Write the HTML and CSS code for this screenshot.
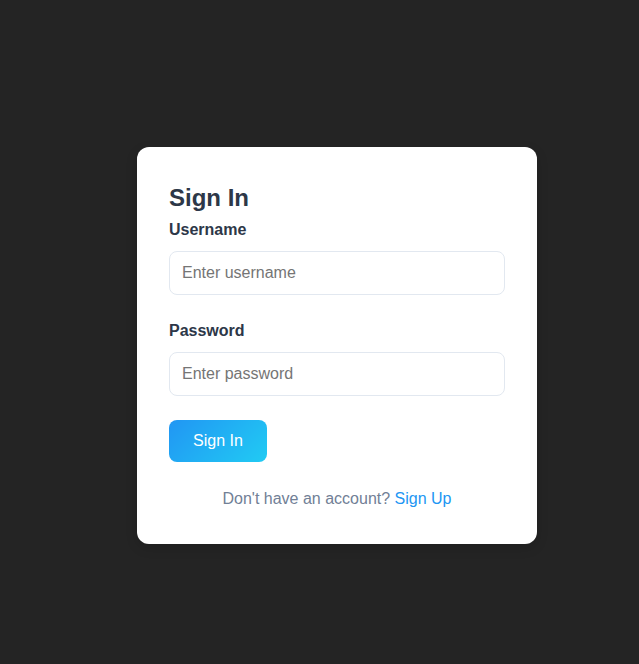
FILE: index.html
```html
<!DOCTYPE html>
<html lang="en">
<head>
<meta charset="utf-8">
<title>Sign In</title>
<link rel="stylesheet" href="styles.css">
</head>
<body>
<div class="page">
  <div class="card">
    <h2 class="title">Sign In</h2>
    <form class="form">
      <div class="group">
        <label class="label" for="username">Username</label>
        <input class="input" id="username" type="text" placeholder="Enter username">
      </div>
      <div class="group">
        <label class="label" for="password">Password</label>
        <input class="input" id="password" type="password" placeholder="Enter password">
      </div>
      <button class="btn" type="button">Sign In</button>
    </form>
    <p class="footer">Don't have an account? <a class="link" href="#">Sign Up</a></p>
  </div>
</div>
</body>
</html>
```
FILE: styles.css
```css
html, body {
  margin: 0;
  padding: 0;
  background: #242424;
  font-family: "Liberation Sans", Arial, sans-serif;
}
.page {
  padding: 147px 0 0 137px;
  min-height: 664px;
  box-sizing: border-box;
}
.card {
  width: 400px;
  box-sizing: border-box;
  background: #ffffff;
  border-radius: 12px;
  padding: 32px 32px 32px;
  box-shadow: 0 4px 12px rgba(0, 0, 0, 0.15);
}
.title {
  margin: 0 0 5px;
  font-size: 24px;
  font-weight: 700;
  color: #2d3748;
  line-height: 1.55;
}
.form {
  margin: 0;
}
.group {
  margin-bottom: 27px;
}
.group + .group {
  margin-bottom: 24px;
}
.label {
  display: block;
  font-size: 16px;
  font-weight: 700;
  color: #2d3748;
  margin-bottom: 12px;
}
.input {
  display: block;
  width: 100%;
  box-sizing: border-box;
  height: 44px;
  padding: 0 12px;
  font-family: "Liberation Sans", Arial, sans-serif;
  font-size: 16px;
  border: 1px solid #e2e8f0;
  border-radius: 8px;
  background: #fff;
  color: #2d3748;
  outline: none;
}
.input::placeholder {
  color: #757575;
}
.btn {
  display: block;
  padding: 12px 24px;
  height: 42px;
  box-sizing: border-box;
  border: none;
  border-radius: 8px;
  background: linear-gradient(135deg, #2196f3, #21cbf3);
  color: #ffffff;
  font-family: "Liberation Sans", Arial, sans-serif;
  font-size: 16px;
  line-height: 18px;
  cursor: pointer;
}
.footer {
  margin: 28px 0 4px;
  text-align: center;
  font-size: 16px;
  color: #718096;
}
.link {
  color: #2196f3;
  text-decoration: none;
}
```
